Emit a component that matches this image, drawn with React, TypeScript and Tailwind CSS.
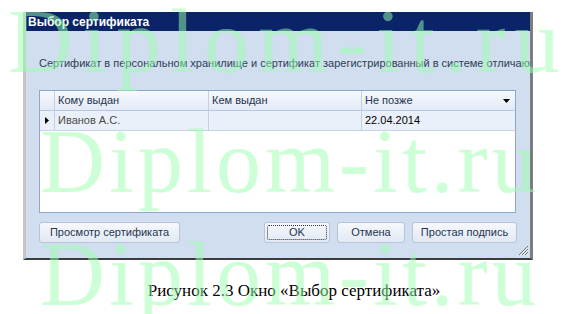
const ui = { fontFamily: '"Liberation Sans", Arial, sans-serif' }
const serif = { fontFamily: '"Liberation Serif", "Times New Roman", serif' }

function GripIcon() {
  return (
    <svg width="12" height="12" viewBox="0 0 12 12" className="absolute bottom-[2px] right-[1px]">
      <path d="M11 2 L2 11 M11 5 L5 11 M11 8 L8 11" stroke="#6b6b6b" strokeWidth="1" />
      <path d="M11.5 3 L3 11.5 M11.5 6 L6 11.5 M11.5 9 L9 11.5" stroke="#ffffff" strokeWidth="0.8" />
    </svg>
  )
}

function DialogButton({ label, width, focused }: { label: string; width: string; focused?: boolean }) {
  return (
    <button
      type="button"
      className={`${width} relative h-[21px] rounded-[3px] border border-[#b3c4db] bg-gradient-to-b from-[#f6f8fc] to-[#e1e9f4] text-[11px] text-[#1f3550]`}
      style={ui}
    >
      {focused && <span className="absolute inset-[2px] rounded-[2px] border border-dotted border-[#333]" />}
      {label}
    </button>
  )
}

const WATERMARKS = [
  { pos: 'top-[-3px] left-[8px] tracking-[9px]' },
  { pos: 'top-[117px] left-[40px] tracking-[4px]' },
  { pos: 'top-[230px] left-[40px] tracking-[4px]' },
]

export default function App() {
  return (
    <div className="relative h-[314px] w-[576px] overflow-hidden bg-white">
      <div className="pl-[23px] pt-[12px]">
        <div className="flex h-[248px] w-[510px] flex-col border-b-[2px] border-l-[3px] border-r-[3px] border-b-[#3c3c3c] border-l-[#c6c6c6] border-r-[#7d7d7d]">
          <div className="flex h-[19px] items-center bg-[#0b2468] pl-[2px] text-[12px] font-bold text-white" style={ui}>
            Выбор сертификата
          </div>
          <div className="relative flex flex-1 flex-col bg-[#d0deef] pl-[13px]">
            <div className="mt-[26px] h-[13px] overflow-hidden whitespace-nowrap pl-[-1px] text-[11px] leading-[13px] text-[#2c3e55]" style={ui}>
              Сертификат в персональном хранилище и сертификат зарегистрированный в системе отличаются
            </div>
            <div className="mt-[20px] flex h-[123px] w-[477px] flex-col border border-[#8ea6c8] bg-white text-[11px]" style={ui}>
              <div className="flex h-[20px] border-b border-[#b7c8e0] bg-gradient-to-b from-[#f7f9fd] to-[#e2eaf6] text-[#1e3350]">
                <div className="w-[15px] border-r border-[#c2d1e6]" />
                <div className="flex w-[154px] items-center border-r border-[#c2d1e6] pl-[3px]">Кому выдан</div>
                <div className="flex w-[153px] items-center border-r border-[#c2d1e6] pl-[3px]">Кем выдан</div>
                <div className="flex flex-1 items-center justify-between pl-[3px] pr-[5px]">
                  <span>Не позже</span>
                  <svg width="7" height="4" viewBox="0 0 7 4">
                    <path d="M0 0 H7 L3.5 4 Z" fill="#000" />
                  </svg>
                </div>
              </div>
              <div className="flex h-[20px] border-b border-[#c5d4e9] bg-[#eaf0f9]">
                <div className="flex w-[15px] items-center justify-center border-r border-[#c2d1e6]">
                  <svg width="4" height="7" viewBox="0 0 4 7">
                    <path d="M0 0 V7 L4 3.5 Z" fill="#000" />
                  </svg>
                </div>
                <div className="flex w-[154px] items-center border-r border-[#c2d1e6] pl-[3px] text-[#4a4a4a]">Иванов А.С.</div>
                <div className="w-[153px] border-r border-[#c2d1e6]" />
                <div className="flex flex-1 items-center pl-[3px] text-black">22.04.2014</div>
              </div>
            </div>
            <div className="mt-[9px] flex w-[478px] items-center justify-between">
              <DialogButton label="Просмотр сертификата" width="w-[141px]" />
              <div className="flex gap-[7px]">
                <DialogButton label="OK" width="w-[66px]" focused />
                <DialogButton label="Отмена" width="w-[68px]" />
                <DialogButton label="Простая подпись" width="w-[105px]" />
              </div>
            </div>
            <GripIcon />
          </div>
        </div>
      </div>
      <div className="mt-[21px] flex justify-center pl-[12px] text-[17px] leading-[19px] text-black" style={serif}>
        Рисунок 2.3 Окно «Выбор сертификата»
      </div>
      {WATERMARKS.map((w, i) => (
        <div
          key={i}
          className={`pointer-events-none absolute ${w.pos} whitespace-nowrap text-[90px] leading-none text-[#99ffad80]`}
          style={serif}
        >
          Diplom-it.ru
        </div>
      ))}
    </div>
  )
}
